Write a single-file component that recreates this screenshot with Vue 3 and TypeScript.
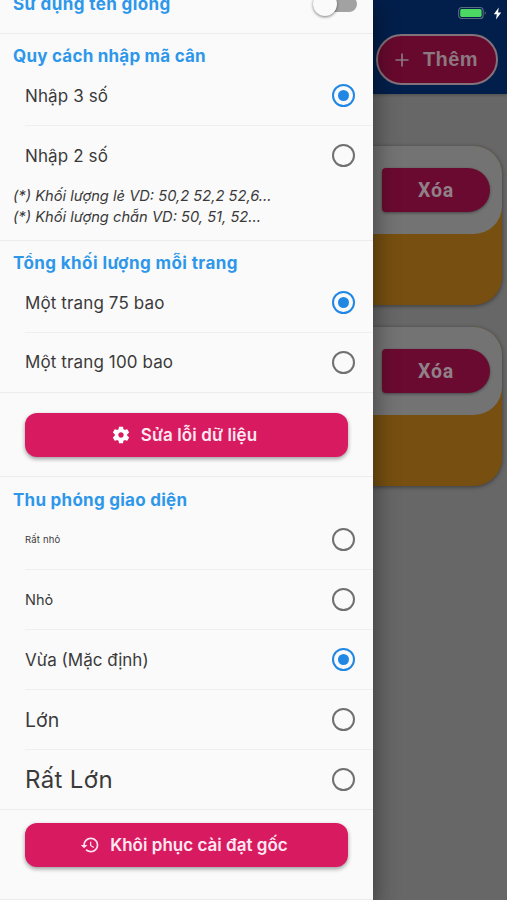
<script setup lang="ts">
import { ref } from 'vue'

interface Option {
  label: string
  cls: string
}

const codeOptions: Option[] = [
  { label: 'Nhập 3 số', cls: 'm' },
  { label: 'Nhập 2 số', cls: 'm' },
]
const pageOptions: Option[] = [
  { label: 'Một trang 75 bao', cls: 'm' },
  { label: 'Một trang 100 bao', cls: 'm' },
]
const zoomOptions: Option[] = [
  { label: 'Rất nhỏ', cls: 'xs' },
  { label: 'Nhỏ', cls: 's' },
  { label: 'Vừa (Mặc định)', cls: 'm narrow' },
  { label: 'Lớn', cls: 'l' },
  { label: 'Rất Lớn', cls: 'xl' },
]

const codeMode = ref(0)
const pageMode = ref(0)
const zoomMode = ref(2)
</script>

<template>
  <div class="screen">
    <div class="page">
      <header class="appbar">
        <div class="status">
          <svg class="battery" width="40" height="14" viewBox="0 0 40 14">
            <rect x="0.75" y="0.75" width="28" height="12.5" rx="3.5" fill="none" stroke="#58697f" stroke-width="1.3" />
            <rect x="2.5" y="2.5" width="24.5" height="9" rx="1.8" fill="#4bd964" />
            <path d="M30.5 5v4q1.3-.6 1.3-2t-1.3-2z" fill="#58697f" />
          </svg>
          <svg class="bolt" width="9" height="13" viewBox="0 0 9 13">
            <path d="M5.8 .6.8 7.3h3L3 12.4l5.2-6.9H5z" fill="#fff" />
          </svg>
        </div>
        <button class="add">
          <svg width="14" height="14" viewBox="0 0 14 14">
            <path d="M7 .5v13M.5 7h13" stroke="#8b7881" stroke-width="1.7" />
          </svg>
          <span>Thêm</span>
        </button>
      </header>
      <main class="cards">
        <article v-for="n in 2" :key="n" class="card">
          <div class="card-top">
            <button class="remove">Xóa</button>
          </div>
        </article>
      </main>
    </div>

    <aside class="drawer">
      <section class="section first">
        <h2 class="t0">Sử dụng tên giống</h2>
        <span class="switch"><i></i></span>
      </section>

      <section class="section">
        <h2 class="t1">Quy cách nhập mã cân</h2>
        <div v-for="(o, i) in codeOptions" :key="o.label" class="row" @click="codeMode = i">
          <span :class="o.cls">{{ o.label }}</span>
          <span class="radio" :class="{ on: codeMode === i }"></span>
        </div>
        <div class="notes">
          <p>(*) Khối lượng lẻ VD: 50,2 52,2 52,6...</p>
          <p>(*) Khối lượng chẵn VD: 50, 51, 52...</p>
        </div>
      </section>

      <section class="section pages">
        <h2 class="t2">Tổng khối lượng mỗi trang</h2>
        <div v-for="(o, i) in pageOptions" :key="o.label" class="row" @click="pageMode = i">
          <span :class="o.cls">{{ o.label }}</span>
          <span class="radio" :class="{ on: pageMode === i }"></span>
        </div>
      </section>

      <section class="section action">
        <button class="primary">
          <svg width="20" height="20" viewBox="0 0 24 24" fill="#fff">
            <path d="M19.43 12.98c.04-.32.07-.64.07-.98s-.03-.66-.07-.98l2.11-1.65c.19-.15.24-.42.12-.64l-2-3.46c-.12-.22-.39-.3-.61-.22l-2.49 1c-.52-.4-1.08-.73-1.69-.98l-.38-2.65C14.46 2.18 14.25 2 14 2h-4c-.25 0-.46.18-.49.42l-.38 2.65c-.61.25-1.17.59-1.69.98l-2.49-1c-.23-.09-.49 0-.61.22l-2 3.46c-.13.22-.07.49.12.64l2.11 1.65c-.04.32-.07.65-.07.98s.03.66.07.98l-2.11 1.65c-.19.15-.24.42-.12.64l2 3.46c.12.22.39.3.61.22l2.49-1c.52.4 1.08.73 1.69.98l.38 2.65c.03.24.24.42.49.42h4c.25 0 .46-.18.49-.42l.38-2.65c.61-.25 1.17-.59 1.69-.98l2.49 1c.23.09.49 0 .61-.22l2-3.46c.12-.22.07-.49-.12-.64zM12 15.2c-1.8 0-3.2-1.4-3.2-3.2s1.4-3.2 3.2-3.2 3.2 1.4 3.2 3.2-1.4 3.2-3.2 3.2z" />
          </svg>
          <span class="b1">Sửa lỗi dữ liệu</span>
        </button>
      </section>

      <section class="section zoom">
        <h2 class="t3">Thu phóng giao diện</h2>
        <div v-for="(o, i) in zoomOptions" :key="o.label" class="row" @click="zoomMode = i">
          <span :class="o.cls">{{ o.label }}</span>
          <span class="radio" :class="{ on: zoomMode === i }"></span>
        </div>
      </section>

      <section class="section reset">
        <button class="primary">
          <svg width="20" height="20" viewBox="0 0 24 24" fill="#ffe3ee">
            <path d="M13 3c-4.97 0-9 4.03-9 9H1l3.89 3.89.07.14L9 12H6c0-3.87 3.13-7 7-7s7 3.13 7 7-3.13 7-7 7c-1.93 0-3.68-.79-4.94-2.06l-1.42 1.42C8.27 19.99 10.51 21 13 21c4.97 0 9-4.03 9-9s-4.03-9-9-9zm-1 5v5l4.28 2.54.72-1.21-3.5-2.08V8H12z" />
          </svg>
          <span class="b2">Khôi phục cài đạt gốc</span>
        </button>
      </section>
    </aside>
  </div>
</template>

<style>
body {
  overflow: hidden;
}
</style>

<style scoped>
.screen {
  position: relative;
  width: 507px;
  height: 900px;
  overflow: hidden;
  font-family: Inter, 'Noto Sans', sans-serif;
}
.screen * {
  box-sizing: border-box;
}
h2,
p {
  margin: 0;
}
button {
  border: 0;
  padding: 0;
  font-family: inherit;
}
.page {
  height: 900px;
  background: #676767;
}
.appbar {
  height: 94px;
  background: #021f4b;
  display: flex;
  flex-direction: column;
  align-items: flex-end;
  box-shadow: 0 1px 3px rgba(0, 0, 0, 0.25);
}
.status {
  height: 34px;
  padding: 6px 5px 0 0;
  display: flex;
}
.battery {
  width: 35px;
  overflow: hidden;
}
.bolt {
  margin-top: 1px;
}
.add {
  width: 122px;
  height: 51px;
  margin-right: 9px;
  border: 2px solid #827279;
  border-radius: 26px;
  background: #67092d;
  display: flex;
  align-items: center;
  padding-left: 17px;
  gap: 14px;
  color: #8b7881;
  font: bold 20px 'Liberation Sans', sans-serif;
  letter-spacing: 0.4px;
}
.cards {
  padding: 52px 5px 0 300px;
  display: flex;
  flex-direction: column;
  gap: 21px;
}
.card {
  height: 159px;
  background: #774f10;
  border-radius: 28px;
  box-shadow: 0 1px 4px rgba(0, 0, 0, 0.45);
}
.card + .card {
  margin-top: 1px;
}
.card-top {
  height: 88px;
  border-radius: 28px;
  background: #737373;
  padding: 22px 12px;
  display: flex;
  justify-content: flex-end;
}
.remove {
  width: 108px;
  height: 44px;
  border-radius: 4px 22px 22px 4px;
  background: #6b0a30;
  color: #908189;
  font: bold 19.5px Roboto, sans-serif;
  letter-spacing: 0.8px;
  box-shadow: 0 1px 3px rgba(0, 0, 0, 0.4);
}
.drawer {
  position: absolute;
  left: 0;
  top: 0;
  width: 372.5px;
  height: 900px;
  background: #fafafa;
  box-shadow: 0 8px 22px 2px rgba(0, 0, 0, 0.42);
  color: #3a3a3a;
}
.section {
  border-bottom: 1px solid #ececec;
}
.first {
  height: 34px;
  display: flex;
  justify-content: space-between;
  padding-right: 16px;
}
.first h2 {
  margin-top: -18px;
}
.switch {
  position: relative;
  width: 38px;
  height: 16px;
  margin-top: -4px;
  border-radius: 8px;
  background: #a2a2a2;
}
.switch i {
  position: absolute;
  left: -6px;
  top: -4px;
  width: 24px;
  height: 24px;
  border-radius: 50%;
  background: #fafafa;
  box-shadow: 0 1px 3px rgba(0, 0, 0, 0.5);
}
h2 {
  height: 32px;
  padding: 6px 0 0 13px;
  font-size: 17px;
  line-height: 32px;
  font-weight: 700;
  color: #2e97ea;
  white-space: nowrap;
}
.t0 {
  letter-spacing: 0.4px;
}
.t1 {
  letter-spacing: 0.22px;
}
.t2 {
  letter-spacing: 0.41px;
}
.t3 {
  letter-spacing: 0.26px;
}
.row {
  height: 60px;
  margin-left: 25px;
  padding-right: 18px;
  display: flex;
  align-items: center;
  justify-content: space-between;
  border-bottom: 1px solid #efefef;
  white-space: nowrap;
}
.row:last-child,
.row:has(+ .notes) {
  border-bottom-color: transparent;
}
.pages .row:last-child,
.zoom .row:last-child {
  height: 59px;
}
.radio {
  width: 23px;
  height: 23px;
  border-radius: 50%;
  border: 2px solid #707070;
  display: flex;
  align-items: center;
  justify-content: center;
}
.radio.on {
  border-color: #2087e5;
}
.radio.on::after {
  content: '';
  width: 11px;
  height: 11px;
  flex: none;
  border-radius: 50%;
  background: #2087e5;
}
.notes {
  height: 54px;
  padding-left: 13px;
  font-size: 14.7px;
  line-height: 21px;
  font-style: italic;
  white-space: nowrap;
}
.xs {
  font-size: 9.5px;
  letter-spacing: 0.2px;
}
.s {
  font-size: 14.5px;
}
.m {
  font-size: 17px;
  letter-spacing: 0.12px;
}
.m.narrow {
  letter-spacing: 0;
}
.l {
  font-size: 19.5px;
}
.xl {
  font-size: 24px;
  letter-spacing: 0.35px;
}
.action {
  height: 84px;
  padding: 20px 24.5px 0 25px;
}
.primary {
  width: 100%;
  height: 44px;
  padding-right: 5px;
  border-radius: 12px;
  background: #d81b60;
  box-shadow: 0 2px 4px rgba(0, 0, 0, 0.38);
  color: #ffe8f1;
  display: flex;
  align-items: center;
  justify-content: center;
  gap: 10px;
  font-size: 17px;
  font-weight: 600;
  white-space: nowrap;
}
.b1 {
  letter-spacing: 0.1px;
}
.b2 {
  letter-spacing: 0.02px;
}
.zoom h2 {
  height: 33px;
  padding-top: 7px;
}
.reset {
  height: 90px;
  padding: 13px 24.5px 0 25px;
}
</style>
